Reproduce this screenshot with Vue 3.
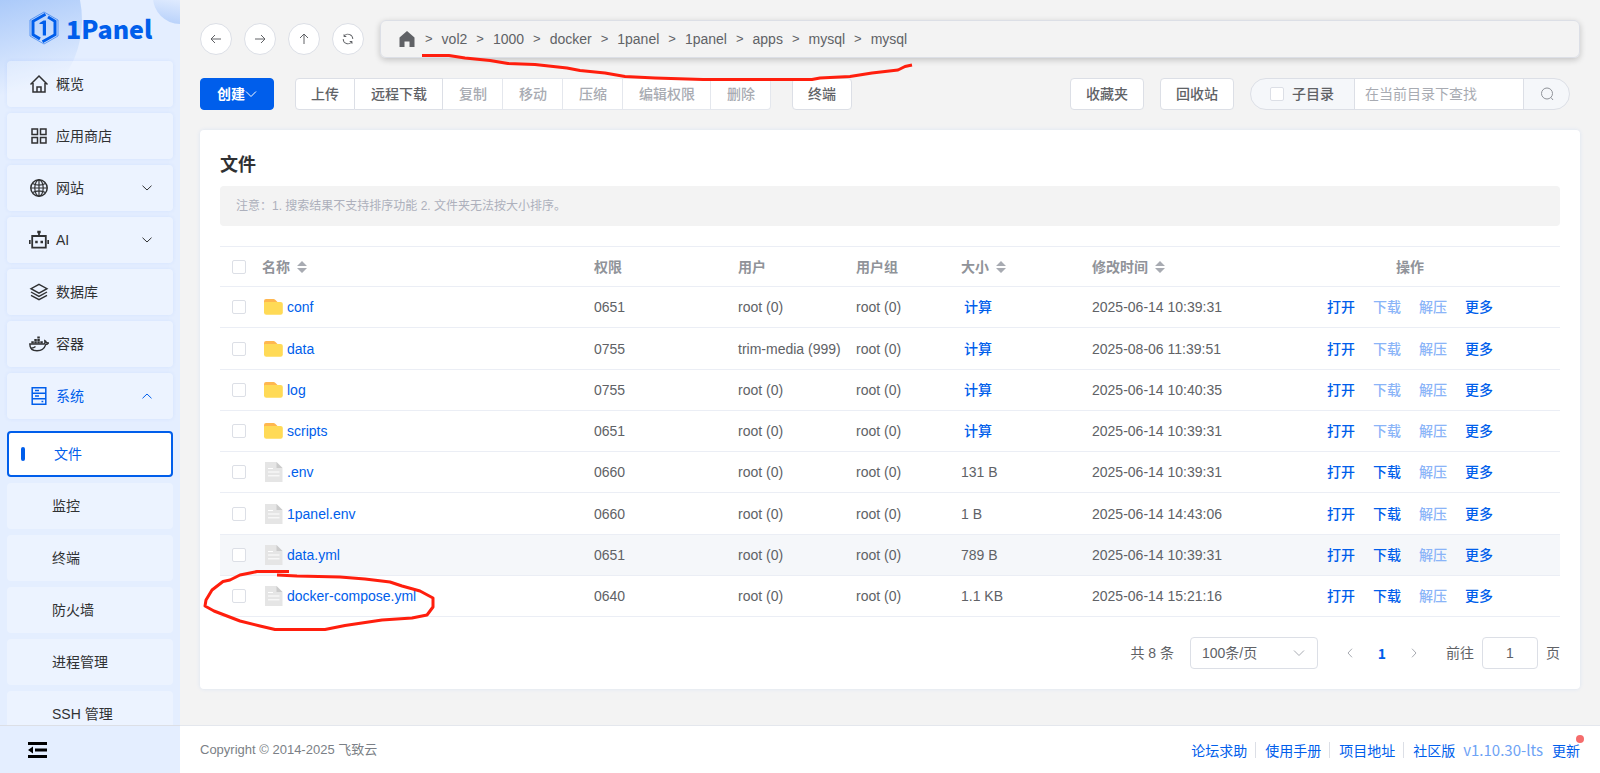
<script setup>
import { ref } from 'vue'

const menu = [
  { key: 'home', label: '概览' },
  { key: 'apps', label: '应用商店' },
  { key: 'web', label: '网站', arrow: 'down' },
  { key: 'ai', label: 'AI', arrow: 'down' },
  { key: 'db', label: '数据库' },
  { key: 'docker', label: '容器' },
  { key: 'system', label: '系统', arrow: 'up', active: true },
]
const submenu = ['文件', '监控', '终端', '防火墙', '进程管理', 'SSH 管理']
const crumbs = ['vol2', '1000', 'docker', '1panel', '1panel', 'apps', 'mysql', 'mysql']
const actions = [
  { label: '上传' },
  { label: '远程下载' },
  { label: '复制', disabled: true },
  { label: '移动', disabled: true },
  { label: '压缩', disabled: true },
  { label: '编辑权限', disabled: true },
  { label: '删除', disabled: true },
]
const columns = [
  { label: '名称', sort: true },
  { label: '权限' },
  { label: '用户' },
  { label: '用户组' },
  { label: '大小', sort: true },
  { label: '修改时间', sort: true },
]
const files = [
  { name: 'conf', dir: true, mode: '0651', user: 'root (0)', time: '2025-06-14 10:39:31' },
  { name: 'data', dir: true, mode: '0755', user: 'trim-media (999)', time: '2025-08-06 11:39:51' },
  { name: 'log', dir: true, mode: '0755', user: 'root (0)', time: '2025-06-14 10:40:35' },
  { name: 'scripts', dir: true, mode: '0651', user: 'root (0)', time: '2025-06-14 10:39:31' },
  { name: '.env', mode: '0660', user: 'root (0)', size: '131 B', time: '2025-06-14 10:39:31' },
  { name: '1panel.env', mode: '0660', user: 'root (0)', size: '1 B', time: '2025-06-14 14:43:06' },
  { name: 'data.yml', mode: '0651', user: 'root (0)', size: '789 B', time: '2025-06-14 10:39:31', hover: true },
  { name: 'docker-compose.yml', mode: '0640', user: 'root (0)', size: '1.1 KB', time: '2025-06-14 15:21:16' },
]
const links = ['论坛求助', '使用手册', '项目地址', '社区版']
const page = ref('1')
const query = ref('')
</script>

<template>
  <div class="app">
    <aside class="sidebar">
      <div class="deco deco-left"></div>
      <div class="deco deco-right"></div>
      <a class="logo" href="#" aria-label="1Panel">
        <svg width="30" height="34" viewBox="0 0 30 34" fill="none">
          <path d="M15 1 29 9v16l-14 8L1 25V9z" stroke="#005eeb" stroke-width=".7" opacity=".75" />
          <path d="M16.500 3.300 4 10.300v13.400l7 4.200M19 6l7 4.300v13.400L13.500 30.700" stroke="#005eeb" stroke-width="3" />
          <path d="M10.500 12 14.500 9.500h2.500V24.500h-3.200V13h-3.300z" fill="#005eeb" />
        </svg>
        <span>1Panel</span>
      </a>
      <nav class="menu">
        <a v-for="m in menu" :key="m.key" href="#" class="item" :class="{ active: m.active }">
          <svg class="mi" viewBox="0 0 20 20" width="20" height="20" fill="none" stroke="currentColor" stroke-width="1.500">
            <template v-if="m.key === 'home'">
              <path d="M1.500 10.500 10 2l8.500 8.500M4 9v9h12V9M8 18v-5h4v5" />
            </template>
            <template v-else-if="m.key === 'apps'">
              <path d="M3 3h5.500v5.500H3zM11.500 3H17v5.500h-5.500zM3 11.500h5.500V17H3zM11.500 11.500H17V17h-5.500z" />
            </template>
            <template v-else-if="m.key === 'web'">
              <circle cx="10" cy="10" r="8.200" />
              <path d="M10 2v16M2 10h16M3.500 5.500c4 2 9 2 13 0M3.500 14.500c4-2 9-2 13 0" stroke-width="1.200" />
              <ellipse cx="10" cy="10" rx="4.200" ry="8.200" stroke-width="1.200" />
            </template>
            <template v-else-if="m.key === 'ai'">
              <path d="M3.200 6h13.600v11.700H3.200zM10 6V2M.750 10v4M19.250 10v4" stroke-width="1.800" />
              <path d="M8.300 2h3.400M6.200 12h2.500M11.500 12H14" stroke-width="2.600" />
            </template>
            <template v-else-if="m.key === 'db'">
              <path d="M10 2.300 18 6.700l-8 4.400-8-4.400zM2 10l8 4.400 8-4.400M2 13.300l8 4.400 8-4.400" stroke-width="1.400" />
            </template>
            <template v-else-if="m.key === 'docker'">
              <path d="M.800 10h14.400c1-.500.700-2 .600-3.300 1.200.500 1.500 1.300 1.500 2 .800-.100 1.500 0 2.200.300-.700 1.200-1.700 1.500-2.800 1.600C15.500 14.500 12.500 16.700 8 16.700c-4.500 0-7.200-2.300-7.200-6.700z" stroke-width="1.400" />
              <path d="M2.300 8.300h2.500M5.300 8.300h2.500M8.300 8.300h2.500M11.300 8.300h2.500M5.300 6h2.500M8.300 6h2.500M8.300 3.500h2.500" stroke-width="2.200" />
              <path d="M1.500 14c2.500.300 4-.500 5-1.500" stroke-width="1.200" />
            </template>
            <template v-else>
              <path d="M3.200 1.700h13.600v16.600H3.200zM3.200 7.200h13.600M3.200 12.700h13.600M6 4.500h4M6 10h4M12.500 15.500h1.800" />
            </template>
          </svg>
          <span class="label">{{ m.label }}</span>
          <svg v-if="m.arrow" class="chev" :class="m.arrow" viewBox="0 0 10 6" width="10" height="6">
            <path d="M.5.700 5 5 9.500.700" fill="none" stroke="currentColor" />
          </svg>
        </a>
        <div class="submenu">
          <a v-for="(s, i) in submenu" :key="s" href="#" class="item sub" :class="{ current: i === 0 }">{{ s }}</a>
        </div>
      </nav>
      <div class="collapse">
        <button type="button" aria-label="收起菜单">
          <svg width="20" height="18" viewBox="0 0 20 18">
            <path d="M0 1h19v3H0zM7 7.500h12v3H7zM0 14h19v3H0zM0 9l5-3.500v7z" />
          </svg>
        </button>
      </div>
    </aside>

    <div class="main">
      <main class="content">
        <div class="pathbar">
          <div class="navs">
            <button type="button" aria-label="后退"><svg viewBox="0 0 14 14"><path d="M12 7H2M6 3 2 7l4 4" /></svg></button>
            <button type="button" aria-label="前进"><svg viewBox="0 0 14 14"><path d="M2 7h10M8 3l4 4-4 4" /></svg></button>
            <button type="button" aria-label="上级"><svg viewBox="0 0 14 14"><path d="M7 12V2M3 6l4-4 4 4" /></svg></button>
            <button type="button" aria-label="刷新">
              <svg viewBox="0 0 1024 1024" class="solid"><path d="M771.776 794.880A384 384 0 0 1 128 512h64a320 320 0 0 0 555.712 216.448H654.720a32 32 0 1 1 0-64h149.056a32 32 0 0 1 32 32v148.928a32 32 0 1 1-64 0v-50.560zM276.288 295.616h92.992a32 32 0 0 1 0 64H220.160a32 32 0 0 1-32-32V178.560a32 32 0 0 1 64 0v50.560A384 384 0 0 1 896.128 512h-64a320 320 0 0 0-555.776-216.384z" /></svg>
            </button>
          </div>
          <nav class="crumbs">
            <a href="#" aria-label="根目录" class="root">
              <svg width="16" height="16" viewBox="0 0 16 16"><path d="M8 0 .500 6.500V16h5v-5.500h5V16h5V6.500z" fill="#606266" /></svg>
            </a>
            <template v-for="(c, i) in crumbs" :key="i">
              <span class="gt">&gt;</span><a href="#">{{ c }}</a>
            </template>
          </nav>
        </div>

        <div class="toolbar">
          <button type="button" class="btn primary">
            创建<svg width="12" height="8" viewBox="0 0 12 8"><path d="M1 1.500 6 6.500l5-5" fill="none" stroke="currentColor" /></svg>
          </button>
          <div class="group">
            <button v-for="a in actions" :key="a.label" type="button" class="btn" :disabled="a.disabled">{{ a.label }}</button>
          </div>
          <button type="button" class="btn">终端</button>
          <div class="right">
            <button type="button" class="btn">收藏夹</button>
            <button type="button" class="btn">回收站</button>
            <div class="search">
              <label class="scope"><input type="checkbox" class="check" />子目录</label>
              <input v-model="query" type="text" placeholder="在当前目录下查找" aria-label="在当前目录下查找" />
              <button type="button" aria-label="搜索">
                <svg width="14" height="14" viewBox="0 0 14 14" fill="none" stroke="#909399"><circle cx="7" cy="6.500" r="5.500" /><path d="m11 10.500 2 2.500" /></svg>
              </button>
            </div>
          </div>
        </div>

        <section class="card">
          <h1>文件</h1>
          <p class="notice">注意：1. 搜索结果不支持排序功能 2. 文件夹无法按大小排序。</p>
          <table>
            <colgroup>
              <col class="c-check" /><col /><col class="c-mode" /><col class="c-user" />
              <col class="c-group" /><col class="c-size" /><col class="c-time" /><col class="c-ops" />
            </colgroup>
            <thead>
              <tr>
                <th><input type="checkbox" class="check" aria-label="全选" /></th>
                <th v-for="c in columns" :key="c.label">
                  <span class="th">{{ c.label }}
                    <svg v-if="c.sort" width="10" height="12" viewBox="0 0 10 12" fill="#a8abb2"><path d="M5 0l5 5H0zM0 7h10l-5 5z" /></svg>
                  </span>
                </th>
                <th class="center">操作</th>
              </tr>
            </thead>
            <tbody>
              <tr v-for="f in files" :key="f.name" :class="{ hover: f.hover }">
                <td><input type="checkbox" class="check" :aria-label="f.name" /></td>
                <td>
                  <div class="name">
                    <svg v-if="f.dir" width="22" height="20" viewBox="0 0 22 20">
                      <path d="M2 4q0-2 2-2h7.500q1 0 1.700.700L15.500 5v6H2z" fill="#ffb74f" />
                      <path d="M2 5.800q0-.800 1-.800H18.500q2.300 0 2.300 2v8.500q0 2.300-2.300 2.300H4.300Q2 17.800 2 15.500z" fill="#ffda56" />
                    </svg>
                    <svg v-else width="22" height="20" viewBox="0 0 22 20">
                      <path d="M3 0h11.500L20.500 6v14H3z" fill="#e5e5e5" />
                      <path d="M14.500 0 20.500 6h-6z" fill="#cbcbcb" />
                      <path d="M6 6.500h5M6 10h11.500M6 13.800h11.500" stroke="#fff" stroke-width="1" />
                    </svg>
                    <a href="#">{{ f.name }}</a>
                  </div>
                </td>
                <td>{{ f.mode }}</td>
                <td>{{ f.user }}</td>
                <td>root (0)</td>
                <td>
                  <button v-if="f.dir" type="button" class="link calc">计算</button>
                  <template v-else>{{ f.size }}</template>
                </td>
                <td>{{ f.time }}</td>
                <td>
                  <div class="ops">
                    <button type="button" class="link">打开</button>
                    <button type="button" class="link" :disabled="f.dir">下载</button>
                    <button type="button" class="link" disabled>解压</button>
                    <button type="button" class="link">更多</button>
                  </div>
                </td>
              </tr>
            </tbody>
          </table>
          <div class="pager">
            <span>共 8 条</span>
            <div class="size">
              <select aria-label="每页条数"><option>100条/页</option></select>
              <svg width="12" height="8" viewBox="0 0 12 8"><path d="M1 1.500 6 6.500l5-5" fill="none" stroke="#a8abb2" /></svg>
            </div>
            <div class="pages">
              <button type="button" aria-label="上一页"><svg width="8" height="10" viewBox="0 0 8 10"><path d="M6 .700 2 5l4 4.300" /></svg></button>
              <button type="button" class="on">1</button>
              <button type="button" aria-label="下一页"><svg width="8" height="10" viewBox="0 0 8 10"><path d="M2 .700 6 5 2 9.300" /></svg></button>
            </div>
            <label class="jump">前往<input v-model="page" type="text" />页</label>
          </div>
        </section>
      </main>

      <footer class="footer">
        <span class="copy">Copyright © 2014-2025 飞致云</span>
        <div class="links">
          <a v-for="l in links" :key="l" href="#">{{ l }}</a>
          <span class="ver">v1.10.30-lts</span>
          <a href="#" class="update">更新<i class="dot"></i></a>
        </div>
      </footer>
    </div>

    <svg class="ink" width="940" height="650" viewBox="0 0 940 650" aria-hidden="true">
      <path d="M422 55.500H449L465 58 490 60.500 508 63.500 535 64.500 567 68 580 70.500 605 73 625 76.500 655 78 703 79.500H812L820 78 850 76.500 872 73 898 70 905 66.500 912 65" />
      <path d="M289 571.500H257L250 573 240 575 230 580 223 581.500 212 590 206 600 205 606 214 611 240 621 260 626 275 629.500H325L345 625.500 382 620 412 618 427 615 433 607V598L420 591 402 586 390 582 365 579 340 577 297 576 277 575" />
    </svg>
  </div>
</template>

<style>
html,
body {
  margin: 0;
  overflow: hidden;
}
</style>

<style scoped>
.app {
  position: relative;
  display: flex;
  height: 100vh;
  overflow: hidden;
  background: #f3f3f3;
  color: #606266;
  font: 14px/20px "Liberation Sans", "Noto Sans CJK SC", sans-serif;
}
* {
  box-sizing: border-box;
}
a {
  color: inherit;
  text-decoration: none;
}
button,
input,
select {
  margin: 0;
  font: inherit;
  color: inherit;
  outline: none;
}
button {
  cursor: pointer;
}

/* sidebar */
.sidebar {
  position: relative;
  flex: none;
  display: flex;
  flex-direction: column;
  width: 180px;
  overflow: hidden;
  background: #e4eeff;
}
.deco {
  position: absolute;
  border-radius: 50%;
}
.deco-left {
  left: -118px;
  top: -80px;
  width: 200px;
  height: 200px;
  background: linear-gradient(165deg, #a8c8f9 42%, #e4eeff 82%);
}
.deco-right {
  left: 153px;
  top: -30px;
  width: 54px;
  height: 54px;
  background: linear-gradient(190deg, #e4eeff 50%, #b3cefa 100%);
}
.logo {
  position: relative;
  flex: none;
  display: flex;
  align-items: center;
  gap: 7px;
  height: 55px;
  padding-left: 29px;
  color: #005eeb;
  font: 900 25px/40px "Noto Sans CJK SC", sans-serif;
}
.menu {
  position: relative;
  flex: 1;
  display: flex;
  flex-direction: column;
  gap: 6px;
  min-height: 0;
  padding: 6px 7px 0;
  overflow: hidden;
}
.item {
  flex: none;
  display: flex;
  align-items: center;
  height: 46px;
  padding: 0 21px 0 22px;
  border-radius: 4px;
  background: rgba(255, 255, 255, 0.3);
  box-shadow: 0 0 4px rgba(0, 94, 235, 0.07);
  color: #303133;
}
.item .label {
  flex: 1;
  padding-left: 7px;
}
.item.active {
  color: #005eeb;
}
.chev.up {
  transform: rotate(180deg);
}
.submenu {
  display: flex;
  flex-direction: column;
  gap: 6px;
  padding-top: 6px;
}
.item.sub {
  padding-left: 45px;
  box-shadow: none;
}
.item.current {
  gap: 29px;
  padding-left: 12px;
  border: 2px solid #005eeb;
  background: #fff;
  color: #005eeb;
}
.item.current::before {
  content: "";
  width: 4px;
  height: 14px;
  border-radius: 2px;
  background: #005eeb;
}
.collapse {
  position: relative;
  flex: none;
  display: flex;
  align-items: center;
  height: 48px;
  padding-left: 28px;
  border-top: 1px solid #dcdfe6;
  background: #e4eeff;
}
.collapse button {
  display: flex;
  padding: 0;
  border: 0;
  background: none;
  color: #000;
}

/* main column */
.main {
  flex: 1;
  min-width: 0;
  display: flex;
  flex-direction: column;
}
.content {
  flex: 1;
  min-height: 0;
  display: flex;
  flex-direction: column;
  gap: 20px;
  padding: 20px 20px 0;
}
.pathbar {
  display: flex;
  align-items: center;
  gap: 16px;
}
.navs {
  display: flex;
  gap: 12px;
}
.navs button {
  display: flex;
  align-items: center;
  justify-content: center;
  width: 32px;
  height: 32px;
  padding: 0;
  border: 1px solid #dcdfe6;
  border-radius: 50%;
  background: #fff;
}
.navs svg {
  width: 14px;
  height: 14px;
  fill: none;
  stroke: #606266;
}
.navs .solid {
  fill: #606266;
  stroke: none;
}
.crumbs {
  flex: 1;
  display: flex;
  align-items: center;
  height: 38px;
  padding-left: 18px;
  border: 1px solid #dcdfe6;
  border-radius: 6px;
  box-shadow: 0 2px 6px rgba(0, 0, 0, 0.2);
}
.root {
  display: flex;
  padding-right: 1px;
}
.gt {
  padding: 0 9px;
  font-size: 13px;
}

/* toolbar */
.toolbar {
  display: flex;
  align-items: center;
}
.btn {
  height: 32px;
  padding: 0 15px;
  border: 1px solid #dcdfe6;
  border-radius: 4px;
  background: #fff;
  font-weight: 500;
  white-space: nowrap;
}
.btn:disabled {
  border-color: #e4e7ed;
  color: #a8abb2;
}
.btn.primary {
  display: flex;
  align-items: center;
  border-color: #005eeb;
  background: #005eeb;
  color: #fff;
  padding: 0 16px;
  font-weight: 700;
}
.group {
  display: flex;
  margin: 0 21px;
}
.group .btn {
  border-radius: 0;
}
.group .btn:first-child {
  border-radius: 4px 0 0 4px;
}
.group .btn:last-child {
  border-radius: 0 4px 4px 0;
}
.group .btn + .btn {
  border-left-width: 0;
  padding-left: 16px;
}
.right {
  flex: 1;
  display: flex;
  justify-content: flex-end;
  gap: 16px;
  padding-right: 10px;
}
.search {
  display: flex;
  width: 320px;
  height: 32px;
  border: 1px solid #dcdfe6;
  border-radius: 16px;
  background: #f5f7fa;
  overflow: hidden;
}
.scope {
  flex: none;
  display: flex;
  align-items: center;
  gap: 8px;
  width: 104px;
  padding-left: 19px;
  border-right: 1px solid #dcdfe6;
  font-weight: 500;
}
.search input[type="text"] {
  flex: 1;
  min-width: 0;
  padding: 0 10px;
  border: 0;
  background: #fff;
}
.search input::placeholder {
  color: #a8abb2;
}
.search button {
  display: flex;
  align-items: center;
  justify-content: center;
  width: 46px;
  padding: 0;
  border: 0;
  border-left: 1px solid #dcdfe6;
  background: none;
}
.check {
  appearance: none;
  display: block;
  width: 14px;
  height: 14px;
  border: 1px solid #dcdfe6;
  border-radius: 2px;
  background: #fff;
}

/* file card */
.card {
  padding: 23px 20px 20px;
  border-radius: 4px;
  background: #fff;
  box-shadow: 0 0 4px rgba(0, 94, 235, 0.1);
}
h1 {
  margin: 0 0 9px;
  color: #303133;
  font-size: 18px;
  line-height: 24px;
  font-weight: 700;
}
.notice {
  margin: 0 0 20px;
  padding: 10px 16px;
  border-radius: 4px;
  background: #f3f3f3;
  color: #adb0bc;
  font-size: 12px;
}
table {
  width: 100%;
  table-layout: fixed;
  border-collapse: separate;
  border-spacing: 0;
  border-top: 1px solid #ebeef5;
}
.c-check { width: 30px; }
.c-mode { width: 144px; }
.c-user { width: 118px; }
.c-group { width: 105px; }
.c-size { width: 131px; }
.c-time { width: 180px; }
.c-ops { width: 300px; }
th,
td {
  height: 41px;
  padding: 0 0 0 12px;
  border-bottom: 1px solid #ebeef5;
  text-align: left;
  white-space: nowrap;
}
th {
  height: 40px;
  color: #909399;
  font-weight: 700;
}
tbody tr:nth-child(4n + 2) td {
  height: 42px;
}
th.center {
  padding: 0;
  text-align: center;
}
.th {
  display: flex;
  align-items: center;
  gap: 7px;
}
.hover td {
  background: #f5f7fa;
}
.name {
  display: flex;
  align-items: center;
  gap: 3px;
  color: #005eeb;
}
.link {
  padding: 0;
  border: 0;
  background: none;
  color: #005eeb;
  font-weight: 500;
}
.link:disabled {
  color: #8ab4f8;
}
.link.calc {
  padding: 0 3px;
}
.ops {
  display: flex;
  gap: 18px;
  padding-left: 55px;
}

/* pagination */
.pager {
  display: flex;
  align-items: center;
  justify-content: flex-end;
  margin-top: 20px;
}
.size {
  position: relative;
  width: 128px;
  margin: 0 16px;
}
.size select {
  appearance: none;
  display: block;
  width: 100%;
  height: 32px;
  padding: 0 11px;
  border: 1px solid #dcdfe6;
  border-radius: 4px;
  background: #fff;
}
.size svg {
  position: absolute;
  right: 13px;
  top: 12px;
}
.pages {
  display: flex;
  margin-right: 16px;
}
.pages button {
  display: flex;
  align-items: center;
  justify-content: center;
  width: 32px;
  height: 32px;
  padding: 0;
  border: 0;
  background: none;
}
.pages svg {
  fill: none;
  stroke: #a8abb2;
}
.pages .on {
  color: #005eeb;
  font-family: "Noto Sans CJK SC", sans-serif;
  font-weight: 700;
}
.jump {
  display: flex;
  align-items: center;
  gap: 8px;
}
.jump input {
  width: 56px;
  height: 32px;
  padding: 0;
  border: 1px solid #dcdfe6;
  border-radius: 4px;
  text-align: center;
}

/* footer */
.footer {
  flex: none;
  display: flex;
  align-items: center;
  justify-content: space-between;
  height: 48px;
  padding: 0 20px;
  border-top: 1px solid #e4e7ed;
  background: #fff;
}
.copy {
  color: #7b7f86;
  font-size: 13px;
}
.links {
  display: flex;
  align-items: center;
  color: #005eeb;
  font-family: "Noto Sans CJK SC", sans-serif;
}
.links a + a {
  margin-left: 8px;
  padding-left: 9px;
  border-left: 1px solid #dcdfe6;
  line-height: 16px;
}
.ver {
  margin: 0 9px 0 8px;
  color: #6ea3f5;
  font-size: 15px;
}
.update {
  position: relative;
}
.dot {
  position: absolute;
  right: -4px;
  top: -5px;
  width: 8px;
  height: 8px;
  border-radius: 50%;
  background: #f56c6c;
}
.ink {
  position: absolute;
  left: 0;
  top: 0;
  fill: none;
  stroke: #ff1e0d;
  stroke-width: 3;
  stroke-linejoin: round;
  pointer-events: none;
}
</style>
